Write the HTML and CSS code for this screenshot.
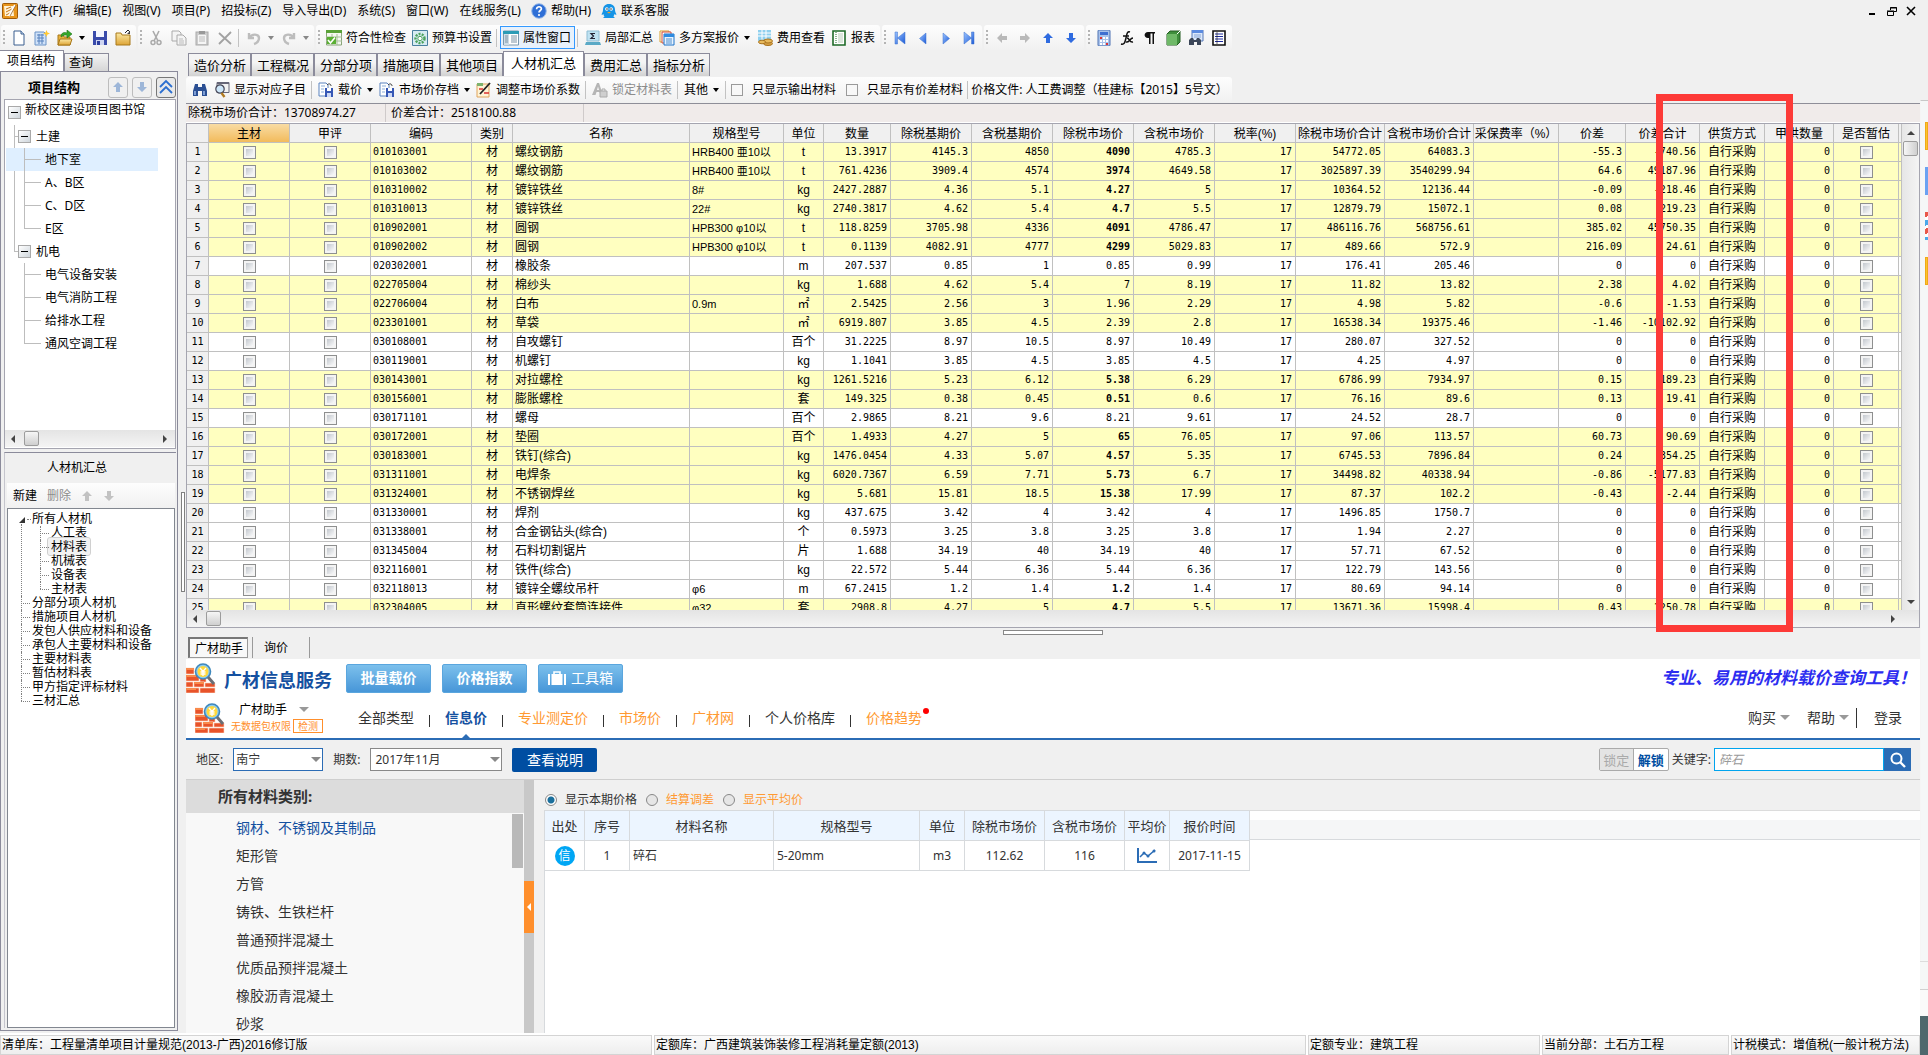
FILE: index.html
```html
<!DOCTYPE html>
<html lang="zh-CN">
<head>
<meta charset="utf-8">
<title>人材机汇总</title>
<link rel="stylesheet" href="styles.css">
</head>
<body>
<svg class="sprite" aria-hidden="true">
  <defs>
    <linearGradient id="gBlue" x1="0" y1="0" x2="1" y2="1"><stop offset="0" stop-color="#9cc4ff"/><stop offset="1" stop-color="#1c5bd8"/></linearGradient>
    <linearGradient id="gGold" x1="0" y1="0" x2="0" y2="1"><stop offset="0" stop-color="#fbe9a4"/><stop offset="1" stop-color="#dda436"/></linearGradient>
  </defs>
  <symbol id="i-app" viewBox="0 0 16 16"><rect x=".5" y=".5" width="15" height="15" rx="1" fill="#e8951c" stroke="#a05a08"/><path d="M2 3h9l1 10H3z" fill="#fff3d8"/><path d="M4 6l5-2M4 9l6-3M4 12l4-2" stroke="#c4761a"/><path d="M13 2L7 13" stroke="#fff" stroke-width="2"/><path d="M14 2L8 13" stroke="#8a4d08" stroke-width=".7"/></symbol>
  <symbol id="i-help" viewBox="0 0 16 16"><circle cx="8" cy="8" r="7.3" fill="#2f6fd6" stroke="#9bbbe8"/><path d="M5.6 6.2c0-3.4 5-3 4.8-.3C10.300 7.500 8 7.600 8 9.500" fill="none" stroke="#fff" stroke-width="1.700"/><circle cx="8" cy="12" r="1.100" fill="#fff"/></symbol>
  <symbol id="i-qq" viewBox="0 0 16 16"><path d="M8 1c4 0 6 2.500 6 6 0 2 1 3 1.500 4.500-1 .5-1.500 0-2-.5-.5 1.500-1 2-1 2.500l1.500 1.500H2l1.500-1.500c-.5-.5-.8-1-1-2.500-.5.500-1 1-2 .5C1 10 2 9 2 7c0-3.500 2-6 6-6z" fill="#1694e6"/><circle cx="5.800" cy="6" r="1.700" fill="#fff"/><circle cx="10.200" cy="6" r="1.700" fill="#fff"/><circle cx="6" cy="6" r=".7"/><circle cx="10" cy="6" r=".7"/><path d="M6 9h4l-2 1.500z" fill="#f5a623"/></symbol>
  <symbol id="i-new" viewBox="0 0 16 16"><path d="M3 1h7l3 3v11H3z" fill="#fff" stroke="#3b5f8f"/><path d="M10 1v3h3" fill="#cfe0f5" stroke="#3b5f8f"/></symbol>
  <symbol id="i-newgrid" viewBox="0 0 16 16"><path d="M1 2h9l2 2v11H1z" fill="#cfe1f8" stroke="#6b93c7"/><path d="M3 5h7M3 8h7M3 11h7M5 4v10M8 4v10" stroke="#5681bd"/><path d="M12.500 0l1 2.500L16 3.500l-2.500 1L12.500 7l-1-2.500L9 3.500l2.500-1z" fill="#ffc933"/></symbol>
  <symbol id="i-open" viewBox="0 0 16 16"><path d="M1 5h5l1 2h6v8H1z" fill="#e9b23c" stroke="#a8781a"/><path d="M3 9h12l-2 6H1z" fill="url(#gGold)" stroke="#a8781a"/><path d="M4 7c0-5 4-5 6-4V0l5 4-5 4V5.500C9 4.500 7 5 4 7z" fill="#35a82a" stroke="#1d7416" stroke-width=".6"/></symbol>
  <symbol id="i-save" viewBox="0 0 16 16"><path d="M1 1h14v14H1z" fill="#3a4bab"/><path d="M4 1h8v6H4z" fill="#f4f6ff"/><path d="M4 10h8v5H4z" fill="#cfd6f2"/><path d="M5 11h3v4H5z" fill="#2e3f9f"/></symbol>
  <symbol id="i-folder" viewBox="0 0 16 16"><path d="M1 3h5l1 2h8v10H1z" fill="url(#gGold)" stroke="#a8781a"/><path d="M10 3l3-3 2 2" stroke="#222" fill="none"/><path d="M15 1v3h-3" fill="#444"/></symbol>
  <symbol id="i-cut" viewBox="0 0 16 16" ><path d="M5 1l5 10M11 1L6 11" stroke="#aaa" stroke-width="1.600"/><circle cx="5" cy="12.500" r="2" fill="none" stroke="#aaa" stroke-width="1.500"/><circle cx="11" cy="12.500" r="2" fill="none" stroke="#aaa" stroke-width="1.500"/></symbol>
  <symbol id="i-copy" viewBox="0 0 16 16"><path d="M1 1h7l2 2v8H1z" fill="#f4f4f4" stroke="#aaa"/><path d="M6 5h6l3 3v7H6z" fill="#f4f4f4" stroke="#aaa"/><path d="M8 9h4M8 11h5M8 13h5" stroke="#bbb"/></symbol>
  <symbol id="i-paste" viewBox="0 0 16 16"><rect x="2" y="2" width="12" height="13" fill="#ccc" stroke="#aaa"/><path d="M5 1h6v3H5z" fill="#999"/><path d="M4 5h8v9H4z" fill="#f5f5f5"/><path d="M5 7h6M5 9h6M5 11h6" stroke="#bbb"/></symbol>
  <symbol id="i-del" viewBox="0 0 16 16"><path d="M2 3l12 11M14 2L2 14" stroke="#a2a2a2" stroke-width="1.800"/></symbol>
  <symbol id="i-undo" viewBox="0 0 16 16"><path d="M3 3v5h5M3 8c3-5 10-4 10 0 0 3-2 5-5 6" fill="none" stroke="#bdbdbd" stroke-width="2.400"/></symbol>
  <symbol id="i-redo" viewBox="0 0 16 16"><path d="M13 3v5H8M13 8c-3-5-10-4-10 0 0 3 2 5 5 6" fill="none" stroke="#bdbdbd" stroke-width="2.400"/></symbol>
  <symbol id="i-check" viewBox="0 0 16 16"><path d="M.5 1h15v14H.5z" fill="#f4f8f0" stroke="#8aa57a"/><path d="M0 0h16v3H0z" fill="#5aa238"/><path d="M6 4v11M11 4v11M0 7h16M0 11h16" stroke="#a6bd98"/><path d="M1 7h9v7H1z" fill="#5ab033"/><path d="M2 10l2.500 3L9 7.500" fill="none" stroke="#fff" stroke-width="1.600"/></symbol>
  <symbol id="i-setup" viewBox="0 0 16 16"><path d="M.5 .5h15v15H.5z" fill="#d7ecf2" stroke="#4a80a0"/><circle cx="8" cy="8.500" r="4.500" fill="none" stroke="#4da35e" stroke-width="2.400" stroke-dasharray="2 1.200"/><circle cx="8" cy="8.500" r="2.200" fill="#fff" stroke="#4da35e"/></symbol>
  <symbol id="i-props" viewBox="0 0 16 16"><path d="M.5 1h15v14H.5z" fill="#fff" stroke="#7b98ad"/><path d="M0 1h16v3H0z" fill="#2b9bb5"/><path d="M1 4h5v11H1z" fill="#cfdde6"/><path d="M2 6h3M2 8h3M2 10h3M2 12h3M8 6h6M8 8h6M8 10h6M8 12h6" stroke="#7d93a5"/></symbol>
  <symbol id="i-sum" viewBox="0 0 16 16"><path d="M2 1h12v10H2z" fill="#bfe2f2" stroke="#8fbdd4"/><path d="M10 3.500H6L8.500 6 6 8.500h4" fill="none" stroke="#223" stroke-width="1.200"/><path d="M1 12h14l1 3H0z" fill="#5aa9c6"/></symbol>
  <symbol id="i-multi" viewBox="0 0 16 16"><path d="M1 1h9v11H1z" fill="#fff" stroke="#d9a02b"/><path d="M3 2h9v11H3z" fill="#fff" stroke="#cf4a3a"/><path d="M5 4h10v11H5z" fill="#e8f3ff" stroke="#1f74c9"/><path d="M5 4h10v3H5z" fill="#2f8be0"/><path d="M7 9h6M7 11h6M7 13h6" stroke="#4f90cf"/></symbol>
  <symbol id="i-fee" viewBox="0 0 16 16"><path d="M1 0h13v11H1z" fill="#8fd0ee"/><path d="M1 3h13M1 6h13M5 0v10M9 0v10" stroke="#fff"/><ellipse cx="11" cy="13.500" rx="4.500" ry="2" fill="#d8a246" stroke="#a87320"/><ellipse cx="11" cy="11" rx="4.500" ry="2" fill="#e8b95c" stroke="#a87320"/><ellipse cx="5" cy="12" rx="3.500" ry="1.800" fill="#e8b95c" stroke="#a87320"/></symbol>
  <symbol id="i-report" viewBox="0 0 16 16"><path d="M2 1h12v14H2z" fill="#fff" stroke="#1e6b28" stroke-width="1.600"/><path d="M5 2v12" stroke="#1e6b28" stroke-dasharray="1 1"/><path d="M7 4h5M7 6h5M7 8h5M7 10h5M7 12h5" stroke="#b7cdb9"/></symbol>
  <symbol id="i-first" viewBox="0 0 16 16"><path d="M3 2h2.500v12H3zM13 2v12L5.500 8z" fill="url(#gBlue)" stroke="#3e73cf" stroke-width=".5"/></symbol>
  <symbol id="i-prev" viewBox="0 0 16 16"><path d="M11 3v11L4.500 8.500z" fill="url(#gBlue)" stroke="#3e73cf" stroke-width=".5"/></symbol>
  <symbol id="i-next" viewBox="0 0 16 16"><path d="M5 3v11l6.500-5.500z" fill="url(#gBlue)" stroke="#3e73cf" stroke-width=".5"/></symbol>
  <symbol id="i-last" viewBox="0 0 16 16"><path d="M10.500 2H13v12h-2.500zM3 2v12l7.500-6z" fill="url(#gBlue)" stroke="#3e73cf" stroke-width=".5"/></symbol>
  <symbol id="i-up" viewBox="0 0 16 16"><path d="M8 3l5 5h-3v5H6V8H3z" fill="currentColor"/></symbol>
  <symbol id="i-down" viewBox="0 0 16 16"><path d="M8 13l5-5h-3V3H6v5H3z" fill="currentColor"/></symbol>
  <symbol id="i-left" viewBox="0 0 16 16"><path d="M3 8l5-5v3h5v4H8v3z" fill="currentColor"/></symbol>
  <symbol id="i-right" viewBox="0 0 16 16"><path d="M13 8L8 3v3H3v4h5v3z" fill="currentColor"/></symbol>
  <symbol id="i-calc" viewBox="0 0 16 16"><rect x="2" y="0" width="12" height="16" rx="1" fill="#a9c2ea" stroke="#4f72b3"/><path d="M4 2h8v3H4z" fill="#3f6fd0"/><path d="M4 8h8M4 11h8M4 14h8" stroke="#fff" stroke-width="2" stroke-dasharray="2 1"/><path d="M4 8h2M10 14h2" stroke="#d33" stroke-width="2"/></symbol>
  <symbol id="i-fx" viewBox="0 0 16 16"><path d="M11 2c-3-1-3 2-4 6s-1.500 7-5 6M4 6h6M8 8c3 0 2 5 6 4M14 8c-3 0-4 5-7 4" fill="none" stroke="#111" stroke-width="1.500"/></symbol>
  <symbol id="i-para" viewBox="0 0 16 16"><path d="M13 2H6C1.500 2 1.500 8 6 8h1v6h1.500V3.500h2V14H12V3.500h1z" fill="#111"/></symbol>
  <symbol id="i-book" viewBox="0 0 16 16"><path d="M2 4l3-3h10v11l-3 3H2z" fill="#3f8f3c" stroke="#245c22"/><path d="M2 4h10v11H2z" fill="#6fb968"/><path d="M12 4l3-3" stroke="#fff"/></symbol>
  <symbol id="i-find" viewBox="0 0 16 16"><path d="M4 0h11v11H4z" fill="#dbe8fb" stroke="#5579b8"/><path d="M4 0h11v3H4z" fill="#5c8be0"/><path d="M6 5h7M6 7h7" stroke="#8aa7d6"/><path d="M1 10l2-2h2l1 2h2l1-2h2l2 2v5H9v-3H6v3H1z" fill="#3b4658"/></symbol>
  <symbol id="i-list" viewBox="0 0 16 16"><path d="M2 1h12v14H2z" fill="#fff" stroke="#111" stroke-width="1.600"/><path d="M4 4h8M4 6.500h8M4 9h8M4 11.500h8" stroke="#1e2c9c"/><path d="M6 2v12" stroke="#111" stroke-width=".6"/></symbol>
  <symbol id="i-bino" viewBox="0 0 16 16"><path d="M3 2h3v3h4V2h3l2 7v5h-5V9H6v5H1V9z" fill="#2b4f93"/><path d="M3 9v4M12 9v4" stroke="#9bb9ea" stroke-width="1.500"/></symbol>
  <symbol id="i-mag" viewBox="0 0 16 16"><path d="M3 .5h12v10H3z" fill="#f2f2f2" stroke="#667"/><path d="M3 0h12v2H3z" fill="#667"/><circle cx="6" cy="7" r="4.200" fill="#cde6f8" stroke="#445" stroke-width="1.200"/><path d="M7.500 11l3 4" stroke="#b07a20" stroke-width="2.400"/></symbol>
  <symbol id="i-load" viewBox="0 0 16 16"><path d="M1 1h7l2 2v11H1z" fill="#fff" stroke="#5b83bf"/><path d="M7 6h8v9H7z" fill="#3657b5"/><path d="M9 6h4v3H9z" fill="#fff"/><path d="M9 11h4v4H9z" fill="#cdd8f4"/><path d="M9 3c2-2 4-1 4 1" fill="none" stroke="#333"/><path d="M3 4h4M3 7h3M3 10h3" stroke="#8badd8"/></symbol>
  <symbol id="i-adjust" viewBox="0 0 16 16"><path d="M1 2h12v13H1z" fill="#fff4d6" stroke="#e0a45c"/><path d="M1 1h6v3H1z" fill="#7db26e"/><path d="M14 1L4 12" stroke="#222" stroke-width="1.800"/><path d="M8 11h5M3 7h4" stroke="#d33" stroke-width="1.400"/></symbol>
  <symbol id="i-lock" viewBox="0 0 16 16"><path d="M0 13L5 1h2l4 12H8.500l-1-3h-3l-1 3zM5 8h2L6 4.500z" fill="#b5b5b5"/><path d="M8 9h7v6H8z" fill="#cfcfcf" stroke="#aaa"/><path d="M10 9V7h3v2" fill="none" stroke="#aaa"/></symbol>
  <symbol id="i-brick" viewBox="0 0 30 30"><path d="M0 5h8v6H0zM0 12h13v6H0zM14 14h6v5h-6zM0 19h7v5H0zM8 19h10v5H8zM19 20h10v4H19zM0 25h13v5H0zM14 25h15v5H14z" fill="#e8532a" stroke="#fbd9c4" stroke-width=".6"/><path d="M0 5h8v2H0zM0 12h10v2H0zM8 19h10v2H8zM0 25h10v2H0z" fill="#f98a4c"/><circle cx="17" cy="8.500" r="7.500" fill="#8ccdf0" stroke="#3f88bd" stroke-width="1.600"/><circle cx="17" cy="8.500" r="5.500" fill="#ffd83c"/><path d="M14 5l3 3.500L20 5M17 8.500V13M14.500 9h5M14.500 11h5" fill="none" stroke="#fff" stroke-width="1.300"/><path d="M22 14l6 7" stroke="#6b6e74" stroke-width="3"/></symbol>
  <symbol id="i-case" viewBox="0 0 18 14"><path d="M0 3h2v11H0zM16 3h2v11h-2zM3.500 3h11v11h-11z" fill="#fff"/><path d="M6 3V1h6v2" fill="none" stroke="#fff" stroke-width="1.600"/></symbol>
  <symbol id="i-chart" viewBox="0 0 20 15"><path d="M1 0v14h19" fill="none" stroke="#2b6cb5" stroke-width="2"/><path d="M3 9l4-4 4 3 7-6" fill="none" stroke="#2b6cb5" stroke-width="1.500"/><circle cx="7" cy="5" r="1.500" fill="#2b6cb5"/><circle cx="11" cy="8" r="1.500" fill="#2b6cb5"/><circle cx="17" cy="3" r="1.500" fill="#2b6cb5"/></symbol>
  <symbol id="i-search" viewBox="0 0 16 16"><circle cx="6.500" cy="6.500" r="5" fill="none" stroke="#fff" stroke-width="2"/><path d="M10 10l5 5" stroke="#fff" stroke-width="2.400"/></symbol>
  <symbol id="i-chev" viewBox="0 0 16 16"><path d="M2 8l6-6 6 6M2 14l6-6 6 6" fill="none" stroke="#2c6fd0" stroke-width="1.800"/></symbol>
</svg>

<div class="app">
  <header class="menubar">
    <svg class="ic menu-logo"><use href="#i-app"/></svg>
    <nav class="menus">
      <button>文件(F)</button><button>编辑(E)</button><button>视图(V)</button><button>项目(P)</button><button>招投标(Z)</button><button>导入导出(D)</button><button>系统(S)</button><button>窗口(W)</button><button>在线服务(L)</button>
      <button><svg class="ic"><use href="#i-help"/></svg>帮助(H)</button>
      <button><svg class="ic"><use href="#i-qq"/></svg>联系客服</button>
    </nav>
    <div class="winctl">
      <button aria-label="最小化"><svg width="10" height="10"><path d="M1 8h6" stroke="#000" stroke-width="2"/></svg></button>
      <button aria-label="还原"><svg width="10" height="10"><path d="M3.500 4V1.500h6v4H7M3 2h7M.5 5.500h6v4h-6zM0 5h7" fill="none" stroke="#000"/></svg></button>
      <button aria-label="关闭"><svg width="10" height="10"><path d="M1 1l8 8M9 1L1 9" stroke="#000" stroke-width="1.600"/></svg></button>
    </div>
  </header>

  <div class="toolbar">
    <div class="group">
      <button class="tb" aria-label="新建"><svg class="ic"><use href="#i-new"/></svg></button>
      <button class="tb" aria-label="新建工程"><svg class="ic"><use href="#i-newgrid"/></svg></button>
      <button class="tb" aria-label="打开"><svg class="ic"><use href="#i-open"/></svg></button><i class="caret"></i>
      <button class="tb" aria-label="保存"><svg class="ic"><use href="#i-save"/></svg></button>
      <button class="tb" aria-label="文件夹"><svg class="ic"><use href="#i-folder"/></svg></button>
    </div>
    <div class="group">
      <button class="tb" aria-label="剪切"><svg class="ic"><use href="#i-cut"/></svg></button>
      <button class="tb" aria-label="复制"><svg class="ic"><use href="#i-copy"/></svg></button>
      <button class="tb" aria-label="粘贴"><svg class="ic"><use href="#i-paste"/></svg></button>
      <button class="tb" aria-label="删除"><svg class="ic"><use href="#i-del"/></svg></button><i class="sep"></i>
      <button class="tb" aria-label="撤销"><svg class="ic"><use href="#i-undo"/></svg></button><i class="caret dim"></i>
      <button class="tb" aria-label="恢复"><svg class="ic"><use href="#i-redo"/></svg></button><i class="caret dim"></i>
    </div>
    <div class="group wide">
      <button class="tbt"><svg class="ic"><use href="#i-check"/></svg>符合性检查</button>
      <button class="tbt"><svg class="ic"><use href="#i-setup"/></svg>预算书设置</button><i class="sep"></i>
      <button class="tbt on"><svg class="ic"><use href="#i-props"/></svg>属性窗口</button><i class="sep"></i>
      <button class="tbt"><svg class="ic"><use href="#i-sum"/></svg>局部汇总</button>
      <button class="tbt"><svg class="ic"><use href="#i-multi"/></svg>多方案报价</button><i class="caret"></i>
      <button class="tbt"><svg class="ic"><use href="#i-fee"/></svg>费用查看</button>
      <button class="tbt"><svg class="ic"><use href="#i-report"/></svg>报表</button>
    </div>
    <div class="group">
      <button class="tb" aria-label="首条"><svg class="ic"><use href="#i-first"/></svg></button>
      <button class="tb" aria-label="上一条"><svg class="ic"><use href="#i-prev"/></svg></button>
      <button class="tb" aria-label="下一条"><svg class="ic"><use href="#i-next"/></svg></button>
      <button class="tb" aria-label="末条"><svg class="ic"><use href="#i-last"/></svg></button>
    </div>
    <div class="group">
      <button class="tb grey" aria-label="左移"><svg class="ic"><use href="#i-left"/></svg></button>
      <button class="tb grey" aria-label="右移"><svg class="ic"><use href="#i-right"/></svg></button>
      <button class="tb blue" aria-label="上移"><svg class="ic"><use href="#i-up"/></svg></button>
      <button class="tb blue" aria-label="下移"><svg class="ic"><use href="#i-down"/></svg></button>
    </div>
    <div class="group">
      <button class="tb" aria-label="计算器"><svg class="ic"><use href="#i-calc"/></svg></button>
      <button class="tb" aria-label="函数"><svg class="ic"><use href="#i-fx"/></svg></button>
      <button class="tb" aria-label="段落"><svg class="ic"><use href="#i-para"/></svg></button>
      <button class="tb" aria-label="定额库"><svg class="ic"><use href="#i-book"/></svg></button>
      <button class="tb" aria-label="查找"><svg class="ic"><use href="#i-find"/></svg></button>
      <button class="tb" aria-label="列表"><svg class="ic"><use href="#i-list"/></svg></button>
    </div>
  </div>

  <div class="work">
    <aside class="side">
      <div class="side-tabs"><button class="on">项目结构</button><button>查询</button></div>
      <div class="side-frame">
        <div class="side-head"><h2>项目结构</h2>
          <button aria-label="上移"><svg class="ic"><use href="#i-up"/></svg></button>
          <button aria-label="下移"><svg class="ic"><use href="#i-down"/></svg></button>
          <button class="chev" aria-label="收起"><svg class="ic"><use href="#i-chev"/></svg></button>
        </div>
        <div class="treebox">
          <div class="tree">
            <div class="root"><i class="box"></i><span>新校区建设项目图书馆</span></div>
            <ul class="l1">
              <li><div class="row"><i class="box"></i>土建</div>
                <ul class="l2"><li><div class="row picked">地下室</div></li><li><div class="row">A、B区</div></li><li><div class="row">C、D区</div></li><li><div class="row">E区</div></li></ul></li>
              <li><div class="row"><i class="box"></i>机电</div>
                <ul class="l2"><li><div class="row">电气设备安装</div></li><li><div class="row">电气消防工程</div></li><li><div class="row">给排水工程</div></li><li><div class="row">通风空调工程</div></li></ul></li>
            </ul>
          </div>
          <div class="hscroll"><i class="arr l"></i><i class="thumb"></i><i class="arr r"></i></div>
        </div>
        <section class="sum-panel">
          <h3>人材机汇总</h3>
          <div class="mini-tools"><button>新建</button><button class="dim">删除</button><button class="dim" aria-label="上移"><svg class="ic"><use href="#i-up"/></svg></button><button class="dim" aria-label="下移"><svg class="ic"><use href="#i-down"/></svg></button></div>
          <div class="dots-box">
            <ul class="dots">
              <li class="top"><i class="tri"></i>所有人材机
                <ul><li>人工表</li><li><span class="pick">材料表</span></li><li>机械表</li><li>设备表</li><li>主材表</li></ul></li>
              <li>分部分项人材机</li><li>措施项目人材机</li><li>发包人供应材料和设备</li><li>承包人主要材料和设备</li><li>主要材料表</li><li>暂估材料表</li><li>甲方指定评标材料</li><li>三材汇总</li>
            </ul>
          </div>
        </section>
      </div>
    </aside>

    <div class="splitter"><i></i></div>

    <main class="main">
      <nav class="tabs"><button>造价分析</button><button>工程概况</button><button>分部分项</button><button>措施项目</button><button>其他项目</button><button class="on">人材机汇总</button><button>费用汇总</button><button>指标分析</button></nav>
      <div class="tools2-line">
        <div class="tools2">
          <button class="tb" aria-label="查找"><svg class="ic"><use href="#i-bino"/></svg></button>
          <button class="tbt"><svg class="ic"><use href="#i-mag"/></svg>显示对应子目</button><i class="sep"></i>
          <button class="tbt"><svg class="ic"><use href="#i-load"/></svg>载价</button><i class="caret"></i>
          <button class="tbt"><svg class="ic"><use href="#i-load"/></svg>市场价存档</button><i class="caret"></i>
          <button class="tbt"><svg class="ic"><use href="#i-adjust"/></svg>调整市场价系数</button><i class="sep"></i>
          <button class="tbt dim"><svg class="ic"><use href="#i-lock"/></svg>锁定材料表</button><i class="sep"></i>
          <button class="tbt">其他</button><i class="caret"></i><i class="sep"></i>
          <label><input type="checkbox">只显示输出材料</label>
          <label><input type="checkbox">只显示有价差材料</label><i class="sep"></i>
          <span>价格文件: 人工费调整（桂建标【2015】5号文）</span>
        </div>
      </div>
      <div class="totals"><span>除税市场价合计：13708974.27</span><span>价差合计：2518100.88</span></div>

      <div class="grid">
        <div class="grid-body">
          <div class="grid-clip">
            <table class="gtable">
              <colgroup><col class="w22"><col class="w81"><col class="w81"><col class="w101"><col class="w41"><col><col class="w94"><col class="w40"><col class="w67"><col class="w81"><col class="w81"><col class="w81"><col class="w81"><col class="w81"><col class="w89"><col class="w89"><col class="w85"><col class="w67"><col class="w74"><col class="w65"><col class="w69"><col class="w65"><col class="w3"></colgroup>
              <thead><tr><th></th><th class="hot">主材</th><th>甲评</th><th>编码</th><th>类别</th><th>名称</th><th>规格型号</th><th>单位</th><th>数量</th><th>除税基期价</th><th>含税基期价</th><th>除税市场价</th><th>含税市场价</th><th>税率(%)</th><th>除税市场价合计</th><th>含税市场价合计</th><th>采保费率（%）</th><th>价差</th><th>价差合计</th><th>供货方式</th><th>甲供数量</th><th>是否暂估</th><th></th></tr></thead>
              <tbody id="rows"></tbody>
            </table>
          </div>
          <div class="vscroll"><i class="arr u"></i><i class="thumb"></i><i class="arr d"></i></div>
        </div>
        <div class="hscroll inset"><i class="arr l"></i><i class="thumb"></i><i class="arr r"></i></div>
        <div class="mark"></div>
      </div>

      <div class="hsplit"><i></i></div>
      <div class="subtabs"><button class="on">广材助手</button><button>询价</button></div>

      <section class="web">
        <div class="brand">
          <svg class="brick"><use href="#i-brick"/></svg><strong>广材信息服务</strong>
          <button class="b">批量载价</button><button class="b">价格指数</button><button><svg class="case"><use href="#i-case"/></svg>工具箱</button>
          <em>专业、易用的材料载价查询工具！</em>
        </div>
        <div class="nav">
          <svg class="brick"><use href="#i-brick"/></svg>
          <div class="who"><div>广材助手<i class="dn"></i></div><div class="warn">无数据包权限<button>检测</button></div></div>
          <ul class="types"><li><a href="#">全部类型</a></li><li class="cur"><a href="#">信息价</a></li><li class="o"><a href="#">专业测定价</a></li><li class="o"><a href="#">市场价</a></li><li class="o"><a href="#">广材网</a></li><li><a href="#">个人价格库</a></li><li class="o new"><a href="#">价格趋势</a></li></ul>
          <div class="acct"><a href="#">购买<i class="dn"></i></a><a href="#">帮助<i class="dn"></i></a><a href="#" class="login">登录</a></div>
        </div>
        <div class="filter">
          <label for="area">地区:</label><span class="drop area"><select id="area"><option>南宁</option></select></span>
          <label for="term">期数:</label><span class="drop term"><select id="term"><option>2017年11月</option></select></span>
          <button class="primary">查看说明</button>
          <span class="lock"><button disabled>锁定</button><button>解锁</button></span>
          <label for="kw" class="kwl">关键字:</label><input id="kw" type="text" placeholder="碎石"><button class="go" aria-label="搜索"><svg class="ic"><use href="#i-search"/></svg></button>
        </div>
        <div class="split">
          <div class="cats">
            <h4>所有材料类别:</h4>
            <div class="cats-body">
              <ul><li class="cur"><a href="#">钢材、不锈钢及其制品</a></li><li><a href="#">矩形管</a></li><li><a href="#">方管</a></li><li><a href="#">铸铁、生铁栏杆</a></li><li><a href="#">普通预拌混凝土</a></li><li><a href="#">优质品预拌混凝土</a></li><li><a href="#">橡胶沥青混凝土</a></li><li><a href="#">砂浆</a></li></ul>
              <i class="bar"></i>
            </div>
          </div>
          <div class="fold"><button aria-label="收起"></button></div>
          <div class="result">
            <div class="radios">
              <label><input type="radio" name="m" checked>显示本期价格</label>
              <label class="o"><input type="radio" name="m">结算调差</label>
              <label class="o"><input type="radio" name="m">显示平均价</label>
            </div>
            <div class="rbody">
              <table class="rtable">
                <colgroup><col class="w40"><col class="w45"><col class="w144"><col class="w146"><col class="w45"><col class="w80"><col class="w80"><col class="w45"><col class="w80"></colgroup>
                <thead><tr><th>出处</th><th>序号</th><th>材料名称</th><th>规格型号</th><th>单位</th><th>除税市场价</th><th>含税市场价</th><th>平均价</th><th>报价时间</th></tr></thead>
                <tbody><tr><td><span class="xin">信</span></td><td>1</td><td class="l">碎石</td><td class="l">5-20mm</td><td>m3</td><td>112.62</td><td>116</td><td><svg class="chart"><use href="#i-chart"/></svg></td><td>2017-11-15</td></tr></tbody>
              </table>
              <div class="rest"></div>
            </div>
          </div>
        </div>
      </section>
    </main>
  </div>

  <footer class="status"><span class="s1">清单库：工程量清单项目计量规范(2013-广西)2016修订版</span><span class="s2">定额库：广西建筑装饰装修工程消耗量定额(2013)</span><span class="s3">定额专业：建筑工程</span><span class="s4">当前分部：土石方工程</span><span class="s5">计税模式：增值税(一般计税方法)</span></footer>
</div>

<div class="desk"><i class="y"></i><i class="b"></i><i class="m"></i><i class="y"></i><div class="desk-foot"></div></div>
<script src="grid.js"></script>
</body>
</html>
```
FILE: styles.css
```css
* { box-sizing: border-box; }
body {
  margin: 0; height: 100vh; display: flex; overflow: hidden;
  background: #f0f0f0; color: #000;
  font: 12px/16px "Noto Sans", "Noto Sans CJK SC", sans-serif;
}
button { font: inherit; color: inherit; background: none; border: 0; padding: 0; margin: 0; white-space: nowrap; }
a { color: inherit; text-decoration: none; }
ul { list-style: none; margin: 0; padding: 0; }
h2, h3, h4 { margin: 0; }
i { font-style: normal; }
.sprite { position: absolute; width: 0; height: 0; }
.ic { width: 16px; height: 16px; flex: none; }

.app { flex: 1; min-width: 0; display: flex; flex-direction: column; }

/* menu bar */
.menubar { height: 22px; flex: none; display: flex; align-items: center; padding-left: 2px; }
.menu-logo { margin-right: 7px; }
.menus { display: flex; gap: 11px; flex: 1; }
.menus button { display: flex; align-items: center; gap: 4px; }
.menus button:nth-last-child(-n+2) { margin-left: -1px; }
.winctl { display: flex; gap: 9px; margin-right: 4px; }
.winctl button { width: 10px; height: 16px; display: flex; align-items: center; }

/* toolbars */
.toolbar { height: 28px; flex: none; display: flex; gap: 2px; padding: 3px 0 0 1px; }
.group { display: flex; align-items: center; height: 25px; padding-right: 2px; border-radius: 3px; background: linear-gradient(#fdfdfd, #f1f1f1); }
.group::before { content: ""; width: 2px; height: 16px; margin: 0 2px; background: repeating-linear-gradient(#b4b4b4 0 2px, transparent 2px 4px); }
.group.wide { padding-right: 3px; }
.tb { width: 23px; height: 23px; display: flex; align-items: center; justify-content: center; }
.tb.grey { color: #b9b9b9; }
.tb.blue { color: #2f6be0; }
.tbt { height: 23px; display: flex; align-items: center; gap: 4px; padding: 0 2px 0 5px; }
.wide .tbt { padding-left: 4px; }
.wide .tbt.on { border: 1px solid #3399ff; background: #e8f1fb; padding: 0 3px 0 2px; }
.tbt.dim, .dim { color: #8c8c8c; }
.sep { width: 1px; height: 18px; background: #c2c2c2; margin: 0 3px 0 2px; flex: none; }
.caret { width: 12px; display: flex; justify-content: center; flex: none; }
.caret::before { content: ""; border: 3px solid transparent; border-top: 4px solid #000; border-bottom: 0; }
.caret.dim::before { border-top-color: #888; }

.work { flex: 1; min-height: 0; display: flex; }

/* left column */
.side { width: 178px; flex: none; display: flex; flex-direction: column; padding-bottom: 2px; }
.side-tabs { display: flex; align-items: flex-end; height: 21px; flex: none; }
.side-tabs button { height: 18px; padding: 0 15px 0 4px; border: 1px solid #8b8b9b; border-bottom: 0; background: linear-gradient(#f4f4f4, #d6d6d6); }
.side-tabs .on { height: 21px; padding: 0 8px 0 7px; background: #fff; border-left: 0; }
.side-frame { flex: 1; min-height: 0; display: flex; flex-direction: column; border: 1px solid #8b8b9b; padding: 3px 1px 2px 3px; }
.side-head { display: flex; align-items: center; gap: 4px; height: 24px; flex: none; }
.side-head h2 { flex: 1; font-size: 13px; line-height: 18px; padding-left: 24px; }
.side-head button { width: 20px; height: 21px; display: flex; align-items: center; justify-content: center; border: 1px solid #bdbdbd; border-radius: 3px; color: #9db6d8; }
.side-head .chev { border-color: #777; background: #e9e9e9; }
.treebox { height: 350px; flex: none; border: 1px solid #a5a5b0; background: #fff; display: flex; flex-direction: column; }
.treebox .hscroll { margin-bottom: 1px; }
.tree { flex: 1; }
.root { height: 25px; display: flex; align-items: center; gap: 4px; padding-left: 3px; }
.root span { padding-bottom: 5px; }
.box { width: 13px; height: 13px; flex: none; border: 1px solid #a9a9a9; background: linear-gradient(#000, #000) center/7px 1px no-repeat, linear-gradient(135deg, #fff, #cfd6dc); }
.tree ul li { position: relative; }
.tree ul li::before { content: ""; position: absolute; left: 0; top: 0; height: 100%; border-left: 1px solid #bdbdbd; }
.tree ul li:last-child::before { height: 12px; }
.tree ul li::after { content: ""; position: absolute; left: 0; top: 11px; width: 4px; border-top: 1px solid #bdbdbd; }
.tree .l2 li::after { width: 17px; }
.tree .row { height: 23px; display: flex; align-items: center; gap: 5px; }
.l1 { margin-left: 9px; }
.l1 > li > .row { padding-left: 4px; }
.l2 { margin-left: 10px; }
.l2 .row { padding-left: 21px; }
.l2 .row.picked { margin-left: -18px; padding-left: 39px; width: 152px; background: #dfefff; }

/* scroll bars */
.hscroll { height: 17px; flex: none; display: flex; align-items: center; background: linear-gradient(#e4e4e4, #f4f4f4); padding: 0 8px 0 6px; gap: 9px; }
.hscroll.inset { padding-right: 24px; }
.hscroll .thumb { width: 15px; height: 15px; border: 1px solid #9c9c9c; border-radius: 2px; background: linear-gradient(#f6f6f6, #cfcfcf); }
.arr { border: 4px solid transparent; width: 0; height: 0; }
.arr.l { border-right-color: #444; border-left: 0; }
.arr.r { border-left-color: #444; border-right: 0; margin-left: auto; }
.arr.u { border-bottom-color: #444; border-top: 0; }
.arr.d { border-top-color: #444; border-bottom: 0; margin-top: auto; }

.sum-panel { flex: 1; min-height: 0; margin-top: 3px; padding: 0 1px 0 2px; border-top: 1px solid #8b8b9b; border-left: 1px solid #c5c5cd; display: flex; flex-direction: column; }
.sum-panel h3 { font-weight: normal; font-size: 12px; line-height: 30px; height: 30px; padding-left: 40px; }
.mini-tools { height: 25px; display: flex; align-items: center; gap: 10px; padding-left: 6px; background: linear-gradient(#fdfdfd, #f1f1f1); }
.mini-tools svg { display: block; color: #c2c2c2; margin: 0 -2px; }
.dots-box { flex: 1; border: 1px solid #828790; background: #fff; padding: 3px 0 0 13px; }
.dots > li, .dots ul li { position: relative; line-height: 14px; white-space: nowrap; }
.dots > li { padding-left: 11px; }
.dots > li::before, .dots ul li::before { content: ""; position: absolute; left: 0; top: 0; height: 100%; border-left: 1px dotted #808080; }
.dots > li.top::before { top: 12px; }
.dots > li:last-child::before, .dots ul li:last-child::before { height: 7px; }
.dots > li::after, .dots ul li::after { content: ""; position: absolute; left: 0; top: 7px; width: 9px; border-top: 1px dotted #808080; }
.dots > li.top::after { left: 6px; width: 4px; }
.dots ul { margin-left: 8px; }
.dots ul li { padding-left: 11px; }
.tri { position: absolute; left: -2px; top: 5px; border-left: 6px solid transparent; border-bottom: 6px solid #333; }
.pick { outline: 1px solid #d0d0d0; background: #f2f2f2; padding: 0 3px; margin-left: -3px; border-radius: 2px; }

.splitter { width: 8px; flex: none; display: flex; justify-content: flex-end; padding-right: 1px; }
.splitter i { width: 4px; height: 100px; margin-top: 442px; border: 1px solid #808080; background: #fff; }

/* main column */
.main { flex: 1; min-width: 0; display: flex; flex-direction: column; }
.tabs { height: 27px; flex: none; display: flex; align-items: flex-end; padding: 0 0 1px 2px; font-size: 13px; }
.tabs button { height: 23px; padding: 0 4px 0 5px; border: 1px solid #8b8b9b; border-bottom: 0; background: linear-gradient(#f4f4f4 40%, #d2d2d2); }
.tabs .on { height: 25px; padding: 0 7px 3px; background: #fff; }
.tools2-line { height: 27px; flex: none; border-bottom: 1px solid #8e8e98; display: flex; }
.tools2 { display: flex; align-items: center; height: 25px; padding: 0 4px 0 2px; border-radius: 3px; background: linear-gradient(#fdfdfd, #f1f1f1); white-space: nowrap; }
.tools2 .tbt { padding-left: 3px; padding-right: 2px; }
.tools2 label { display: flex; align-items: center; gap: 9px; margin: 0 8px 0 2px; }
.tools2 .sep { margin: 0 3px; }
.tools2 label:nth-of-type(2) { margin-right: 1px; }
input[type=checkbox] { appearance: none; margin: 0; width: 12px; height: 12px; border: 1px solid #9a9a9a; background: #f8f8f8; display: block; }
.totals { height: 19px; flex: none; display: flex; background: #f0ebea; border-bottom: 1px solid #fff; line-height: 18px; padding-left: 2px; }
.totals span { width: 198px; border-right: 1px solid #cfcaca; white-space: nowrap; }
.totals span + span { padding-left: 5px; }

.grid { position: relative; flex: none; border: 1px solid #a5a5b0; }
.grid-body { height: 486px; display: flex; overflow: hidden; background: #f0f0f0; }
.grid-clip { flex: 1; min-width: 0; overflow: hidden; }
.gtable { width: 100%; border-collapse: separate; border-spacing: 0; table-layout: fixed; font-family: "Liberation Sans", "Noto Sans CJK SC", sans-serif; }
.gtable th, .gtable td { height: 19px; padding: 0 2px; border-right: 1px solid #c0c0c0; border-bottom: 1px solid #c0c0c0; font-weight: normal; line-height: 16px; white-space: nowrap; overflow: hidden; text-align: center; }
.gtable th { padding: 1px 0 0; background: #f0f0f0; }
.gtable th.hot { background: linear-gradient(#f9dca4, #f2bb5c); }
.gtable td { background: #fff; }
.gtable tr.y td { background: #ffffc0; }
.gtable td:first-child, .gtable tr.y td:first-child { background: #f0f0f0; }
.gtable td.n, .gtable td.c, .gtable td:first-child { font-family: "DejaVu Sans Mono", monospace; font-size: 10px; }
.gtable td.n { text-align: right; padding-right: 3px; }
.gtable td.c, .gtable td.t { text-align: left; }
.gtable td.s { text-align: left; font-size: 11px; }
.gtable td.b { font-weight: bold; }
.gtable input { width: 13px; height: 13px; margin: 0 auto; border: 1px solid #8e8f8f; background: linear-gradient(135deg, #b4bac2, #fff 90%); box-shadow: inset 0 0 0 2px #f4f4f4; }
.w3 { width: 3px; } .w22 { width: 22px; } .w40 { width: 40px; } .w41 { width: 41px; } .w45 { width: 45px; }
.w65 { width: 65px; } .w67 { width: 67px; } .w69 { width: 69px; } .w74 { width: 74px; } .w80 { width: 80px; }
.w81 { width: 81px; } .w85 { width: 85px; } .w89 { width: 89px; } .w94 { width: 94px; } .w101 { width: 101px; }
.w144 { width: 144px; } .w146 { width: 146px; }
.vscroll { width: 17px; display: flex; flex-direction: column; align-items: center; gap: 6px; padding: 7px 0 6px; background: linear-gradient(90deg, #e6e6e6, #f4f4f4); }
.vscroll .thumb { width: 15px; height: 15px; border: 1px solid #9c9c9c; border-radius: 2px; background: linear-gradient(90deg, #f6f6f6, #cfcfcf); }
.mark { position: absolute; right: 126px; top: -30px; width: 137px; height: 538px; border: 7px solid #fd3a37; pointer-events: none; }

.hsplit { height: 9px; flex: none; display: flex; justify-content: center; padding-top: 2px; }
.hsplit i { width: 100px; height: 5px; border: 1px solid #888; background: #fff; }
.subtabs { height: 22px; flex: none; display: flex; padding: 0 0 1px 2px; }
.subtabs button { padding: 0 21px 0 11px; border-right: 1px solid #9a9a9a; }
.subtabs .on { margin-right: 4px; padding: 2px 4px 0 5px; border: 1px solid #999; border-top: 2px solid #777; border-left: 2px solid #777; background: #f8f8f8; }
.subtabs .on + button { border-left: 1px solid #9a9a9a; }

/* price service page */
.web { flex: 1; min-height: 0; display: flex; flex-direction: column; background: #fff; color: #333; }
.brick { width: 30px; height: 30px; flex: none; }
.brand { height: 38px; flex: none; display: flex; align-items: center; }
.brand strong { font-size: 18px; line-height: 24px; color: #1450a0; margin: 0 14px 0 8px; padding-top: 4px; }
.brand button { width: 85px; height: 29px; margin-right: 11px; display: flex; align-items: center; justify-content: center; gap: 5px; color: #fff; font-size: 14px; border: 1px solid #5aa6de; border-radius: 2px; background: linear-gradient(#7cc0ec, #4796d8); }
.brand .b { font-weight: bold; }
.case { width: 18px; height: 14px; }
.brand em { margin-left: auto; padding-right: 4px; font-size: 17px; line-height: 22px; font-weight: bold; color: #2d2df0; white-space: nowrap; }
.nav { height: 43px; flex: none; display: flex; align-items: center; padding-left: 9px; border-bottom: 2px solid #2b6cb5; }
.who { width: 115px; padding-left: 6px; font-size: 12px; color: #000; }
.who > div { display: flex; align-items: center; height: 16px; padding-left: 8px; }
.who > .warn { font-size: 10px; color: #ff8f2c; padding-left: 0; gap: 2px; }
.who button { border: 1px solid #ff8f2c; height: 14px; width: 30px; line-height: 12px; }
.dn { border: 5px solid transparent; border-top-color: #999; border-bottom: 0; display: inline-block; }
.who .dn { margin-left: 12px; }
.types { display: flex; font-size: 14px; line-height: 20px; margin-left: 18px; }
.types li { position: relative; display: flex; align-items: center; }
.types li + li::before { content: ""; width: 1px; height: 12px; background: #333; margin: 6px 15px 0; }
.types .cur { font-weight: bold; color: #1450a0; }
.types .cur::after { content: ""; position: absolute; right: 16px; bottom: -11px; border: 5px solid transparent; border-bottom-color: #2b6cb5; border-top: 0; }
.o { color: #ff9a33; }
.new::after { content: ""; width: 6px; height: 6px; border-radius: 3px; background: #f00; position: absolute; right: -7px; top: 0; }
.acct { margin-left: auto; display: flex; align-items: center; font-size: 14px; line-height: 20px; padding-right: 18px; }
.acct a { display: flex; align-items: center; margin-right: 17px; }
.acct .dn { margin-left: 4px; }
.acct a + a { margin-right: 7px; }
.acct .login { margin: 0; border-left: 1px solid #333; padding-left: 17px; }
.filter { height: 40px; flex: none; display: flex; align-items: center; padding: 0 9px 0 10px; background: #f0f0f0; border-bottom: 1px solid #cfcfcf; }
.drop { position: relative; display: block; margin: 0 10px; }
.drop select { appearance: none; width: 100%; height: 23px; padding: 0 4px; border: 1px solid #888; border-radius: 0; background: #fff; font: inherit; color: #333; display: block; }
.drop::after { content: ""; position: absolute; right: 2px; top: 9px; border: 5px solid transparent; border-top-color: #888; border-bottom: 0; pointer-events: none; }
.area { width: 90px; }
.area select { border-color: #2b6cb5; padding: 0 2px; }
.term { width: 132px; }
.primary { width: 85px; height: 24px; border-radius: 2px; background: #004ea2; color: #fff; font-size: 14px; }
.lock { margin-left: auto; display: flex; height: 23px; border: 1px solid #aaa; border-radius: 2px; font-size: 13px; background: #fff; }
.lock button { width: 34px; color: #004ea2; font-weight: bold; }
.lock button:first-child { color: #aaa; font-weight: normal; background: #e4e4e4; border-right: 1px solid #aaa; }
.kwl { margin: 0 3px; }
#kw { width: 170px; height: 23px; border: 1px solid #00a4ee; padding: 0 4px; font: inherit; background: #fff; border-radius: 0; }
#kw::placeholder { color: #999; font-style: italic; }
.go { width: 27px; height: 23px; background: #2b6cb5; display: flex; align-items: center; justify-content: center; }
.split { flex: 1; min-height: 0; display: flex; }
.cats { width: 338px; flex: none; background: #f8f8f8; overflow: hidden; }
.cats h4 { height: 33px; line-height: 33px; font-size: 15px; padding-left: 32px; background: #dcdcdc; }
.cats-body { display: flex; justify-content: space-between; }
.cats ul { padding-left: 50px; font-size: 14px; line-height: 28px; padding-top: 1px; }
.cats .cur { color: #1450a0; }
.bar { width: 11px; height: 54px; margin: 1px 1px 0 0; background: #b9b9b9; }
.fold { width: 10px; flex: none; background: #c8c8c8; padding-top: 101px; }
.fold button { width: 10px; height: 52px; background: #ff8f2c; display: flex; align-items: center; justify-content: center; }
.fold button::before { content: ""; border: 4px solid transparent; border-right-color: #fff; border-left: 0; }
.result { flex: 1; min-width: 0; display: flex; flex-direction: column; background: #f0f0f0; padding-left: 10px; }
.radios { height: 30px; flex: none; display: flex; align-items: center; gap: 9px; padding: 10px 0 0 1px; }
.radios label { display: flex; align-items: center; gap: 8px; }
.radios input { appearance: none; width: 12px; height: 12px; margin: 0; border: 1px solid #888; border-radius: 6px; background: #e6e6e6; }
.radios input:checked { background: radial-gradient(#1b6f9c 0 3px, #fff 4px); }
.rbody { flex: 1; display: flex; align-items: flex-start; background: #fff; border-left: 1px solid #d7dadd; }
.rtable { border-collapse: collapse; table-layout: fixed; width: 705px; flex: none; margin-left: -1px; }
.rtable th { height: 30px; padding: 0; font-size: 13px; font-weight: normal; background: #ecf5ff; border: 1px solid #d7dadd; line-height: 18px; }
.rtable td { height: 30px; padding: 0; text-align: center; border: 1px solid #d7dadd; }
.rtable td.l { text-align: left; padding-left: 3px; }
.xin { display: block; width: 20px; height: 20px; line-height: 20px; margin: 0 auto; border-radius: 10px; background: #00a6f4; color: #fff; }
.chart { width: 20px; height: 15px; display: block; margin: 0 auto; }
.rest { flex: 1; height: 30px; border-top: 1px solid #dcdcdc; border-bottom: 1px solid #d7dadd; background: linear-gradient(#fff 9px, #f5f6f7 9px); }

/* status bar */
.status { height: 22px; flex: none; display: flex; gap: 2px; padding-top: 2px; background: #fff; font-family: "Liberation Sans", "Noto Sans CJK SC", sans-serif; }
.status span { border: 1px solid #d4d4d4; background: linear-gradient(#fafafa, #eee); line-height: 19px; padding-left: 1px; white-space: nowrap; overflow: hidden; }
.s1, .s2 { flex: 1; }
.s3 { width: 232px; } .s4 { width: 187px; } .s5 { width: 189px; }

/* strip of the desktop beside the window */
.desk { width: 8px; flex: none; border-left: 1px solid #f5f5f5; padding: 21px 0 0 4px; margin-top: 100px; border-top: 1px solid #c8c8c8; background: #f5f7f7; display: flex; flex-direction: column; gap: 17px; }
.desk i { height: 28px; flex: none; }
.desk .y { background: #fbc52d; border: 1px solid #f0a818; }
.desk .b { background: #6aa2f2; }
.desk .m { background: repeating-linear-gradient(160deg, #e8584a 0 5px, #fff 5px 8px, #4aa8ea 8px 13px, #fff 13px 16px); }
.desk-foot { margin: auto 0 0 -5px; height: 94px; border-top: 1px solid #dcdcdc; background: linear-gradient(#f5f7f7 27px, #d0d0d0 27px 28px, #fafafa 28px 54px, #4f686d 54px); }
```
FILE: grid.js
```js
// columns: yellow, bold price, code, name, spec, unit, qty, base, base+tax, market, market+tax, sum, sum+tax, diff, diff sum
const items = `
y|b|010103001|螺纹钢筋|HRB400 亜10以|t|13.3917|4145.3|4850|4090|4785.3|54772.05|64083.3|-55.3|-740.56
y|b|010103002|螺纹钢筋|HRB400 亜10以|t|761.4236|3909.4|4574|3974|4649.58|3025897.39|3540299.94|64.6|49187.96
y|b|010310002|镀锌铁丝|8#|kg|2427.2887|4.36|5.1|4.27|5|10364.52|12136.44|-0.09|-218.46
y|b|010310013|镀锌铁丝|22#|kg|2740.3817|4.62|5.4|4.7|5.5|12879.79|15072.1|0.08|219.23
y|b|010902001|圆钢|HPB300 φ10以|t|118.8259|3705.98|4336|4091|4786.47|486116.76|568756.61|385.02|45750.35
y|b|010902002|圆钢|HPB300 φ10以|t|0.1139|4082.91|4777|4299|5029.83|489.66|572.9|216.09|24.61
||020302001|橡胶条||m|207.537|0.85|1|0.85|0.99|176.41|205.46|0|0
y||022705004|棉纱头||kg|1.688|4.62|5.4|7|8.19|11.82|13.82|2.38|4.02
y||022706004|白布|0.9m|㎡|2.5425|2.56|3|1.96|2.29|4.98|5.82|-0.6|-1.53
y||023301001|草袋||㎡|6919.807|3.85|4.5|2.39|2.8|16538.34|19375.46|-1.46|-10102.92
||030108001|自攻螺钉||百个|31.2225|8.97|10.5|8.97|10.49|280.07|327.52|0|0
||030119001|机螺钉||kg|1.1041|3.85|4.5|3.85|4.5|4.25|4.97|0|0
y|b|030143001|对拉螺栓||kg|1261.5216|5.23|6.12|5.38|6.29|6786.99|7934.97|0.15|189.23
y|b|030156001|膨胀螺栓||套|149.325|0.38|0.45|0.51|0.6|76.16|89.6|0.13|19.41
||030171101|螺母||百个|2.9865|8.21|9.6|8.21|9.61|24.52|28.7|0|0
y|b|030172001|垫圈||百个|1.4933|4.27|5|65|76.05|97.06|113.57|60.73|90.69
y|b|030183001|铁钉(综合)||kg|1476.0454|4.33|5.07|4.57|5.35|6745.53|7896.84|0.24|354.25
y|b|031311001|电焊条||kg|6020.7367|6.59|7.71|5.73|6.7|34498.82|40338.94|-0.86|-5177.83
y|b|031324001|不锈钢焊丝||kg|5.681|15.81|18.5|15.38|17.99|87.37|102.2|-0.43|-2.44
||031330001|焊剂||kg|437.675|3.42|4|3.42|4|1496.85|1750.7|0|0
||031338001|合金钢钻头(综合)||个|0.5973|3.25|3.8|3.25|3.8|1.94|2.27|0|0
||031345004|石料切割锯片||片|1.688|34.19|40|34.19|40|57.71|67.52|0|0
||032116001|铁件(综合)||kg|22.572|5.44|6.36|5.44|6.36|122.79|143.56|0|0
|b|032118013|镀锌全螺纹吊杆|φ6|m|67.2415|1.2|1.4|1.2|1.4|80.69|94.14|0|0
y|b|032304005|直形螺纹套筒连接件|φ32|套|2908.8|4.27|5|4.7|5.5|13671.36|15998.4|0.43|1250.78`.trim().split("\n");

const box = label => `<td><input type="checkbox" aria-label="${label}"></td>`;
const num = (v, bold) => `<td class="n${bold ? " b" : ""}">${v}</td>`;

document.getElementById("rows").innerHTML = items.map((line, i) => {
  const [y, b, code, name, spec, unit, qty, p1, p2, p3, p4, s1, s2, d, ds] = line.split("|");
  return `<tr class="${y}"><td>${i + 1}</td>${box("主材")}${box("甲评")}<td class="c">${code}</td><td>材</td>` +
    `<td class="t">${name}</td><td class="s">${spec}</td><td>${unit}</td>` +
    num(qty) + num(p1) + num(p2) + num(p3, b) + num(p4) + num(17) + num(s1) + num(s2) + "<td></td>" +
    num(d) + num(ds) + "<td>自行采购</td>" + num(0) + box("是否暂估") + "<td></td></tr>";
}).join("");
```
